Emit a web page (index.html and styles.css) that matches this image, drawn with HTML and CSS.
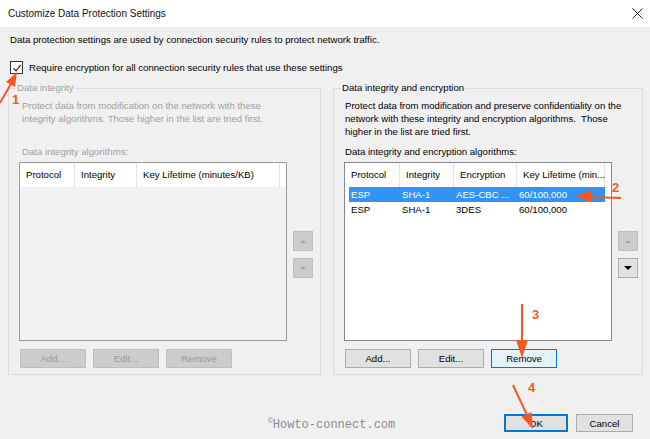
FILE: index.html
```html
<!DOCTYPE html>
<html lang="en">
<head>
  <meta charset="UTF-8" />
  <title>Customize Data Protection Settings</title>
  <link rel="stylesheet" href="styles.css">
</head>
<body>
  <div class="window">
    <div class="titlebar">
      <span class="title">Customize Data Protection Settings</span>
      <svg class="close" width="11" height="11" viewBox="0 0 11 11"><path d="M0.5 0.5L10.5 10.5M10.5 0.5L0.5 10.5" stroke="#222" stroke-width="1"/></svg>
    </div>

    <div class="content">
      <p class="intro">Data protection settings are used by connection security rules to protect network traffic.</p>
      <label class="check">
        <span class="box"><svg width="10" height="10" viewBox="0 0 10 10"><path d="M1.5 5.2L4 7.8L8.8 1.8" fill="none" stroke="#222" stroke-width="1.2"/></svg></span>
        Require encryption for all connection security rules that use these settings
      </label>

      <div class="groups">
        <fieldset class="group disabled">
          <legend>Data integrity</legend>
          <p class="desc">Protect data from modification on the network with these<br>integrity algorithms. Those higher in the list are tried first.</p>
          <p class="label">Data integrity algorithms:</p>
          <div class="listrow">
            <div class="list">
              <div class="head cols-3">
                <span>Protocol</span><span>Integrity</span><span>Key Lifetime (minutes/KB)</span><span></span>
              </div>
            </div>
            <div class="side">
              <button class="arrow off"><i class="tri up"></i></button>
              <button class="arrow off"><i class="tri down"></i></button>
            </div>
          </div>
          <div class="btnrow">
            <button class="btn off">Add...</button>
            <button class="btn off">Edit...</button>
            <button class="btn off">Remove</button>
          </div>
        </fieldset>

        <fieldset class="group wide">
          <legend>Data integrity and encryption</legend>
          <p class="desc">Protect data from modification and preserve confidentiality on the<br>network with these integrity and encryption algorithms.&nbsp; Those<br>higher in the list are tried first.</p>
          <p class="label">Data integrity and encryption algorithms:</p>
          <div class="listrow">
            <div class="list">
              <div class="head cols-4">
                <span>Protocol</span><span>Integrity</span><span>Encryption</span><span>Key Lifetime (min...</span><span></span>
              </div>
              <div class="row cols-4 selected">
                <span>ESP</span><span>SHA-1</span><span>AES-CBC ...</span><span>60/100,000</span>
              </div>
              <div class="row cols-4">
                <span>ESP</span><span>SHA-1</span><span>3DES</span><span>60/100,000</span>
              </div>
            </div>
            <div class="side">
              <button class="arrow off"><i class="tri up"></i></button>
              <button class="arrow"><i class="tri down"></i></button>
            </div>
          </div>
          <div class="btnrow">
            <button class="btn">Add...</button>
            <button class="btn">Edit...</button>
            <button class="btn hot">Remove</button>
          </div>
        </fieldset>
      </div>

      <div class="footer">
        <span class="mark"><sup>©</sup>Howto-connect.com</span>
        <button class="btn ok">OK</button>
        <button class="btn cancel">Cancel</button>
      </div>
    </div>
  </div>

  <!-- tutorial markup drawn over the dialog -->
  <svg class="notes" width="650" height="439" viewBox="0 0 650 439">
    <g stroke="#f15a24" stroke-width="2" fill="#f15a24">
      <line x1="0" y1="103" x2="12" y2="82"/>
      <polygon points="17,72 15,87 6,82" stroke="none"/>
      <line x1="621" y1="198" x2="589" y2="197"/>
      <polygon points="575,196 591,190.5 591,202.5" stroke="none"/>
      <line x1="522" y1="304" x2="522" y2="342"/>
      <polygon points="516,340 528,340 522,358" stroke="none"/>
      <line x1="513" y1="385" x2="527" y2="415"/>
      <polygon points="533,429 531.5,412 521.5,416.7" stroke="none"/>
    </g>
    <g class="num">
      <text x="12" y="104">1</text>
      <text x="612" y="192">2</text>
      <text x="532" y="319">3</text>
      <text x="528" y="392">4</text>
    </g>
  </svg>
</body>
</html>
```

FILE: styles.css
```css
body {
  margin: 0;
  width: 650px;
  height: 439px;
  overflow: hidden;
  position: relative;
  font-family: "Liberation Sans", Arial, sans-serif;
  font-size: 9.6px;
  color: #000;
}
p {
  margin: 0;
}
.window {
  height: 439px;
  display: flex;
  flex-direction: column;
}
.titlebar {
  height: 27px;
  flex: 0 0 27px;
  background: #fff;
  display: flex;
  align-items: center;
  justify-content: space-between;
  padding: 0 7px 0 8px;
}
.title {
  font-size: 10px;
  color: #111;
}
.content {
  flex: 1;
  background: #f0f0f0;
  padding: 0 7px 0 8px;
  display: flex;
  flex-direction: column;
}
.intro {
  margin-top: 7px;
  margin-left: 2px;
  line-height: 12px;
}
.check {
  display: flex;
  align-items: center;
  gap: 6px;
  margin-top: 15px;
  margin-left: 2px;
  height: 13px;
}
.box {
  width: 11px;
  height: 11px;
  border: 1px solid #333;
  background: #fff;
  display: flex;
  align-items: center;
  justify-content: center;
}
.groups {
  display: flex;
  gap: 12px;
  margin-top: 8px;
}
.group {
  margin: 0;
  min-width: 0;
  border: 1px solid #dcdcdc;
  padding: 0 7px 6px 10px;
  width: 313px;
  box-sizing: border-box;
}
.group.wide {
  width: 310px;
  padding-right: 4px;
}
legend {
  padding: 0 1px;
  margin-left: -3px;
  line-height: 12px;
}
.desc {
  margin-top: 5px;
  padding-left: 3px;
  height: 39px;
  line-height: 13px;
  white-space: nowrap;
}
.wide .desc {
  padding-left: 1px;
}
.label {
  margin-top: 7px;
  padding-left: 3px;
  line-height: 13px;
}
.wide .label {
  padding-left: 1px;
}
.disabled,
.disabled legend {
  color: #a0a0a0;
}
.listrow {
  display: flex;
  margin-top: 4px;
}
.list {
  width: 266px;
  height: 177px;
  border: 1px solid #828790;
  background: #fff;
}
.disabled .list {
  background: #f2f2f2;
  border-color: #9a9a9a;
}
.head {
  height: 24px;
  align-items: center;
  background: #fff;
  color: #000;
}
.head span {
  border-right: 1px solid #e5e5e5;
  height: 24px;
  line-height: 24px;
  padding-left: 6px;
  white-space: nowrap;
}
.head span:last-child {
  border-right: none;
}
.cols-3 {
  display: grid;
  grid-template-columns: 55px 62px 143px 1fr;
}
.cols-4 {
  display: grid;
  grid-template-columns: 55px 54px 63px 88px 1fr;
}
.row {
  height: 15px;
  line-height: 15px;
  margin-left: 4px;
  width: 256px;
  grid-template-columns: 51px 54px 63px 88px;
}
.row span {
  padding-left: 2px;
  white-space: nowrap;
}
.selected {
  background: #3193f3;
  color: #fff;
}
.side {
  display: flex;
  flex-direction: column;
  gap: 7px;
  margin-left: 6px;
  padding-top: 69px;
}
.arrow {
  width: 20px;
  height: 20px;
  padding: 0;
  border: 1px solid #adadad;
  background: #e1e1e1;
  display: flex;
  align-items: center;
  justify-content: center;
}
.arrow.off {
  background: #cccccc;
  border-color: #bfbfbf;
}
.tri {
  width: 0;
  height: 0;
  border-left: 4px solid transparent;
  border-right: 4px solid transparent;
}
.tri.up {
  border-bottom: 4px solid #000;
}
.tri.down {
  border-top: 4px solid #000;
}
.off .tri {
  border-left-width: 3px;
  border-right-width: 3px;
}
.off .tri.up {
  border-bottom: 3px solid #a5a5a5;
}
.off .tri.down {
  border-top: 3px solid #a5a5a5;
}
.btnrow {
  display: flex;
  gap: 7px;
  margin-top: 8px;
  margin-left: 1px;
}
.btn {
  width: 66px;
  height: 19px;
  padding: 0;
  font-family: inherit;
  font-size: 9.6px;
  color: #000;
  background: #e1e1e1;
  border: 1px solid #adadad;
}
.btn.off {
  background: #cccccc;
  border-color: #bfbfbf;
  color: #9a9a9a;
}
.btn.hot {
  background: #e5f1fb;
  border-color: #0078d7;
}
.footer {
  display: flex;
  align-items: flex-end;
  gap: 8px;
  margin-top: 39px;
}
.mark {
  font-family: "Liberation Mono", monospace;
  font-size: 12px;
  color: #8c8c8c;
  margin-left: 260px;
  margin-right: auto;
  line-height: 14px;
}
.mark sup {
  font-size: 8px;
}
.ok {
  width: 64px;
  height: 18px;
  border: 2px solid #0078d7;
}
.cancel {
  width: 57px;
  height: 18px;
  margin-right: 10px;
}
.notes {
  position: absolute;
  left: 0;
  top: 0;
  pointer-events: none;
}
.num text {
  font-family: "Liberation Sans", Arial, sans-serif;
  font-size: 13px;
  font-weight: bold;
  fill: #f15a24;
}
```
